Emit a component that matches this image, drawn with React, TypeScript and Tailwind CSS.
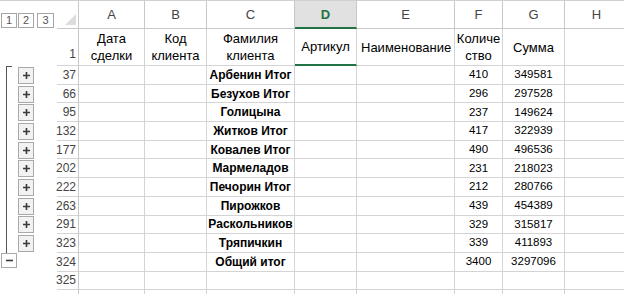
import React from "react";

const rows: { n: string; name: string; f: string; g: string; kind: "plus" | "minus" | "none" }[] = [
  { n: "37", name: "Арбенин Итог", f: "410", g: "349581", kind: "plus" },
  { n: "66", name: "Безухов Итог", f: "296", g: "297528", kind: "plus" },
  { n: "95", name: "Голицына", f: "237", g: "149624", kind: "plus" },
  { n: "132", name: "Житков Итог", f: "417", g: "322939", kind: "plus" },
  { n: "177", name: "Ковалев Итог", f: "490", g: "496536", kind: "plus" },
  { n: "202", name: "Мармеладов", f: "231", g: "218023", kind: "plus" },
  { n: "222", name: "Печорин Итог", f: "212", g: "280766", kind: "plus" },
  { n: "263", name: "Пирожков", f: "439", g: "454389", kind: "plus" },
  { n: "291", name: "Раскольников", f: "329", g: "315817", kind: "plus" },
  { n: "323", name: "Тряпичкин", f: "339", g: "411893", kind: "plus" },
  { n: "324", name: "Общий итог", f: "3400", g: "3297096", kind: "minus" },
  { n: "325", name: "", f: "", g: "", kind: "none" },
  { n: "", name: "", f: "", g: "", kind: "none" },
];

const font = { fontFamily: '"Liberation Sans", Arial, sans-serif' };

function PlusBox() {
  return (
    <div className="w-[16px] h-[17px] border border-[#a9a9a9] bg-[#f2f2f2] flex items-center justify-center">
      <svg width="9" height="9" viewBox="0 0 9 9">
        <path d="M4.5 1v7M1 4.5h7" stroke="#3a3a3a" strokeWidth="1.6" />
      </svg>
    </div>
  );
}

function MinusBox() {
  return (
    <div className="w-[16px] h-[15px] border border-[#a9a9a9] bg-white flex items-center justify-center">
      <svg width="9" height="9" viewBox="0 0 9 9">
        <path d="M1 4.5h7" stroke="#3a3a3a" strokeWidth="1.6" />
      </svg>
    </div>
  );
}

const grid = "border-r border-b border-[#d4d4d4]";

export default function App() {
  return (
    <div className="w-[624px] h-[294px] overflow-hidden bg-white text-black" style={font}>
      <div className="h-px bg-[#d0d0d0]" />
      {/* column header row */}
      <div className="flex h-[28px]">
        <div className="w-[57px] shrink-0 flex items-center gap-[1px] pt-[10px] pl-[1px]">
          {["1", "2"].map((t) => (
            <div key={t} className="w-[16px] h-[15px] border border-[#a6a6a6] flex items-center justify-center text-[11px] text-[#555]">
              {t}
            </div>
          ))}
          <div className="w-[17px] h-[15px] ml-[2px] border border-[#a6a6a6] flex items-center justify-center text-[11px] text-[#555]">
            3
          </div>
        </div>
        <div className="w-[22px] shrink-0 border-b border-r border-[#c8c8c8] flex items-end justify-end pb-[3px] pr-[2px]">
          <svg width="11" height="11" viewBox="0 0 11 11">
            <path d="M11 0L11 11L0 11Z" fill="#dcdcdc" />
          </svg>
        </div>
        {[
          ["A", 66],
          ["B", 62],
          ["C", 88],
        ].map(([l, w]) => (
          <div
            key={l as string}
            className="shrink-0 border-r border-b border-[#c8c8c8] flex items-center justify-center text-[13px] text-[#444] pt-[1px]"
            style={{ width: w as number }}
          >
            {l}
          </div>
        ))}
        <div className="w-[62px] shrink-0 bg-[#e1e1e1] border-r border-[#c8c8c8] border-b-2 border-b-[#217346] flex items-center justify-center text-[13px] font-bold text-[#217346] pt-[2px]">
          D
        </div>
        {[
          ["E", 98],
          ["F", 48],
          ["G", 62],
          ["H", 64],
        ].map(([l, w]) => (
          <div
            key={l as string}
            className="shrink-0 border-r border-b border-[#c8c8c8] flex items-center justify-center text-[13px] text-[#444] pt-[1px]"
            style={{ width: w as number }}
          >
            {l}
          </div>
        ))}
      </div>
      {/* row 1 */}
      <div className="flex h-[37px] text-[13px] leading-[17px]">
        <div className="w-[57px] shrink-0" />
        <div className="w-[22px] shrink-0 border-r border-b border-[#c8c8c8] border-b-[#d4d4d4] flex items-end justify-end pb-[2px] pr-[2px] text-[12px] text-[#444]">
          1
        </div>
        <div className={`w-[66px] shrink-0 ${grid} flex flex-col items-center justify-center`}>
          <span>Дата</span>
          <span>сделки</span>
        </div>
        <div className={`w-[62px] shrink-0 ${grid} flex flex-col items-center justify-center`}>
          <span>Код</span>
          <span>клиента</span>
        </div>
        <div className={`w-[88px] shrink-0 ${grid} flex flex-col items-center justify-center`}>
          <span>Фамилия</span>
          <span>клиента</span>
        </div>
        <div className="w-[62px] shrink-0 border-r border-[#d4d4d4] border-b-2 border-b-[#217346] flex items-center justify-center">
          Артикул
        </div>
        <div className={`w-[98px] shrink-0 ${grid} flex items-center pl-[4px]`}>Наименование</div>
        <div className={`w-[48px] shrink-0 ${grid} flex flex-col items-center justify-center`}>
          <span>Количе</span>
          <span>ство</span>
        </div>
        <div className={`w-[62px] shrink-0 ${grid} flex items-center justify-center`}>Сумма</div>
        <div className={`w-[64px] shrink-0 ${grid}`} />
      </div>
      {/* data rows */}
      {rows.map((r, i) => (
        <div key={i} className="flex h-[18.7px]">
          <div className="w-[57px] shrink-0 relative flex items-center">
            {r.kind === "plus" && (
              <>
                <div className="absolute left-[6px] top-0 bottom-0 w-px bg-[#555]" />
                {i === 0 && <div className="absolute left-[6px] top-0 w-[6px] h-px bg-[#555]" />}
                <div className="ml-[18px]">
                  <PlusBox />
                </div>
              </>
            )}
            {r.kind === "minus" && (
              <div className="ml-[1px] self-start">
                <MinusBox />
              </div>
            )}
          </div>
          <div className="w-[22px] shrink-0 border-r border-b border-[#c8c8c8] border-b-[#d4d4d4] flex items-center justify-end pr-[2px] text-[12px] text-[#444]">
            {r.n}
          </div>
          <div className={`w-[66px] shrink-0 ${grid}`} />
          <div className={`w-[62px] shrink-0 ${grid}`} />
          <div className={`w-[88px] shrink-0 ${grid} flex items-center justify-center text-[12px] font-bold whitespace-nowrap`}>
            {r.name}
          </div>
          <div className={`w-[62px] shrink-0 ${grid}`} />
          <div className={`w-[98px] shrink-0 ${grid}`} />
          <div className={`w-[48px] shrink-0 ${grid} flex items-center justify-center text-[11.5px]`}>{r.f}</div>
          <div className={`w-[62px] shrink-0 ${grid} flex items-center justify-center text-[11.5px]`}>{r.g}</div>
          <div className={`w-[64px] shrink-0 ${grid}`} />
        </div>
      ))}
    </div>
  );
}
